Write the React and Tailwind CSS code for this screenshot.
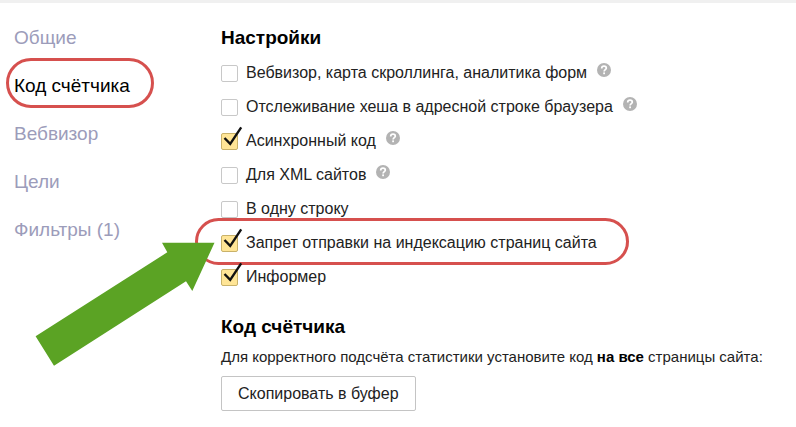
import { useState } from 'react';

const NAV = [
  { id: 'common', label: 'Общие' },
  { id: 'code', label: 'Код счётчика' },
  { id: 'webvisor', label: 'Вебвизор' },
  { id: 'goals', label: 'Цели' },
  { id: 'filters', label: 'Фильтры (1)' },
];

const OPTIONS = [
  { id: 'webvisor', label: 'Вебвизор, карта скроллинга, аналитика форм', hint: true },
  { id: 'hash', label: 'Отслеживание хеша в адресной строке браузера', hint: true },
  { id: 'async', label: 'Асинхронный код', hint: true, checked: true },
  { id: 'xml', label: 'Для XML сайтов', hint: true },
  { id: 'oneline', label: 'В одну строку' },
  { id: 'noindex', label: 'Запрет отправки на индексацию страниц сайта', checked: true, marked: true },
  { id: 'informer', label: 'Информер', checked: true },
];

export default function App() {
  return (
    <div className="flex border-t-3 border-[#f0f0f0] bg-white pb-4 font-['Liberation_Sans',Arial,sans-serif] text-[#222]">
      <Sidebar active="code" />
      <main className="min-w-0 flex-1 pt-[17px]">
        <h2 className="text-[19px] leading-9 font-bold text-black">Настройки</h2>
        <ul>
          {OPTIONS.map((o) => (
            <Option key={o.id} option={o} />
          ))}
        </ul>
        <h2 className="mt-[15px] text-[19px] leading-9 font-bold text-black">Код счётчика</h2>
        <p className="text-[15px] leading-6">
          Для корректного подсчёта статистики установите код <b className="text-black">на все</b> страницы сайта:
        </p>
        <button type="button" className="mt-[7px] h-[35px] rounded-xs border border-[#c4c4c4] bg-white px-4 text-base">
          Скопировать в буфер
        </button>
      </main>
    </div>
  );
}

function Sidebar({ active }) {
  return (
    <nav className="w-[221px] shrink-0 pt-[11px] pl-3.5">
      <ul className="text-[19px]">
        {NAV.map((item) => (
          <li key={item.id} className="h-12 leading-12">
            <a
              href={`#${item.id}`}
              className={item.id === active ? 'relative inline-block text-black' : 'inline-block text-[#9c9cba]'}
            >
              {item.label}
              {item.id === active && (
                <span className="pointer-events-none absolute -top-1 -right-6 bottom-0.5 -left-2 rounded-full border-3 border-[#d6504e]" />
              )}
            </a>
          </li>
        ))}
      </ul>
    </nav>
  );
}

function Option({ option }) {
  const [checked, setChecked] = useState(Boolean(option.checked));

  return (
    <li className="flex h-[34px] items-center">
      <span className="relative flex items-center">
        <span className="relative flex">
          <input
            id={option.id}
            type="checkbox"
            checked={checked}
            onChange={(e) => setChecked(e.target.checked)}
            className="size-[17px] appearance-none rounded-xs border border-[#c8c8c8] bg-white checked:border-[#c9b26a] checked:bg-[#ffe596]"
          />
          {checked && <CheckMark />}
        </span>
        <label htmlFor={option.id} className="pl-2 text-base leading-6">
          {option.label}
        </label>
        {option.marked && (
          <>
            <span className="pointer-events-none absolute -top-[13px] -right-8 -bottom-2.5 -left-[26px] rounded-full border-3 border-[#d6504e]" />
            <Arrow />
          </>
        )}
      </span>
      {option.hint && <Hint />}
    </li>
  );
}

function CheckMark() {
  return (
    <svg
      className="pointer-events-none absolute bottom-0 left-0 h-6 w-[22px]"
      viewBox="0 0 22 24"
      fill="none"
      stroke="#111"
      strokeWidth="2.4"
    >
      <path d="M3.5 12 9.200 17.800 20.200 1.400" />
    </svg>
  );
}

function Hint() {
  return (
    <button type="button" aria-label="Подсказка" className="mb-1.5 ml-2.5 size-3.5">
      <svg viewBox="0 0 14 14" className="size-3.5">
        <circle cx="7" cy="7" r="7" fill="#b3b3b3" />
        <path
          d="M4.7 5.5C4.7 4 5.7 3.2 7 3.2S9.3 4 9.3 5.2C9.3 6.6 7.1 6.8 7.1 8.5"
          fill="none"
          stroke="#fff"
          strokeWidth="1.7"
        />
        <rect x="6.2" y="9.4" width="1.8" height="1.8" fill="#fff" />
      </svg>
    </button>
  );
}

function Arrow() {
  return (
    <svg
      className="pointer-events-none absolute top-[11px] right-full mr-1.5 h-[124px] w-[180px] max-w-none"
      viewBox="0 0 180 124"
      fill="#5ba324"
    >
      <path d="M127 .7H179.500L157.300 49 151 39.300 19 123.700 .600 94.300 132.300 10.300Z" />
    </svg>
  );
}
